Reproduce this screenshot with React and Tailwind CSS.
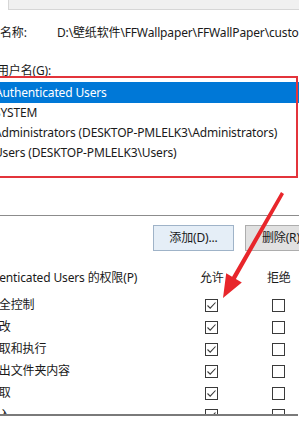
import React from "react";

const FONT = { fontFamily: '"Noto Sans", "Noto Sans CJK SC", sans-serif' };

function Box({ checked }) {
  return (
    <div className="w-[13px] h-[13px] border border-[#3a3a3a] bg-white flex items-center justify-center">
      {checked && (
        <svg width="11" height="11" viewBox="0 0 11 11">
          <path d="M1.5 5.5 L4.2 8.2 L9.5 2.5" fill="none" stroke="#3a3a3a" strokeWidth="1.1" />
        </svg>
      )}
    </div>
  );
}

const perms = [
  ["完全控制", true],
  ["修改", true],
  ["读取和执行", true],
  ["列出文件夹内容", true],
  ["读取", true],
  ["写入", true],
];

const users = [
  "SYSTEM",
  "Administrators (DESKTOP-PMLELK3\\Administrators)",
  "Users (DESKTOP-PMLELK3\\Users)",
];

export default function App() {
  return (
    <div
      className="relative w-[299px] h-[445px] overflow-hidden bg-white text-[12px] text-[#1a1a1a] tracking-[-0.15px]"
      style={FONT}
    >
      <div className="ml-[8px] h-[10px] bg-[#f0f0f0] border-l border-b border-[#d6d6d6]" />

      <div className="mt-[13px] h-[20px] flex items-center whitespace-nowrap">
        <div className="w-[57px] shrink-0">名称:</div>
        <div>D:\壁纸软件\FFWallpaper\FFWallPaper\custom</div>
      </div>

      <div className="mt-[19px] h-[18px] leading-[18px] whitespace-nowrap -ml-[3px]">
        用户名(G):
      </div>

      <div className="-mt-[1px] h-[137px] border-b border-[#8c8c8c] pt-[3px]">
        <div className="h-[21px] bg-[#0078d7] text-white flex items-center whitespace-nowrap">
          <span className="-ml-[5px]">Authenticated Users</span>
        </div>
        {users.map((u) => (
          <div key={u} className="h-[20px] flex items-center whitespace-nowrap">
            <span className="-ml-[6px]">{u}</span>
          </div>
        ))}
      </div>

      <div className="mt-[9px] flex gap-[11px] pl-[153px] whitespace-nowrap">
        <div className="w-[81px] h-[26px] shrink-0 flex items-center justify-center bg-[#e5eef7] border border-[#9fb3c8]">
          添加(D)...
        </div>
        <div className="w-[81px] h-[26px] shrink-0 flex items-center justify-center bg-[#e1e1e1] border border-[#adadad]">
          删除(R)...
        </div>
      </div>

      <div className="h-[150px] border-b-2 border-[#7a7a7a] overflow-hidden mt-[15px] mr-[1px]">
        <div className="h-[23px] grid grid-cols-[200px_67px_1fr] items-center whitespace-nowrap">
          <div className="overflow-hidden">
            <span className="block -ml-[27px]">Authenticated Users 的权限(P)</span>
          </div>
          <div>允许</div>
          <div>拒绝</div>
        </div>
        <div className="pt-[5px]">
          {perms.map(([name, allow]) => (
            <div key={name} className="h-[22px] grid grid-cols-[205px_67px_1fr] items-center whitespace-nowrap">
              <div className="overflow-hidden">
                <span className="block -ml-[13px]">{name}</span>
              </div>
              <Box checked={allow} />
              <Box checked={false} />
            </div>
          ))}
        </div>
      </div>

      <div className="absolute left-[-10px] top-[76px] w-[308px] h-[102px] border-2 border-[#e3343b] pointer-events-none" />

      <svg className="absolute left-0 top-0 pointer-events-none" width="299" height="445" viewBox="0 0 299 445">
        <polygon
          points="281,192 284,194 235.9,279 241.8,282.6 223,298 226.2,273.3 232.1,276.8"
          fill="#e8262b"
        />
      </svg>
    </div>
  );
}
